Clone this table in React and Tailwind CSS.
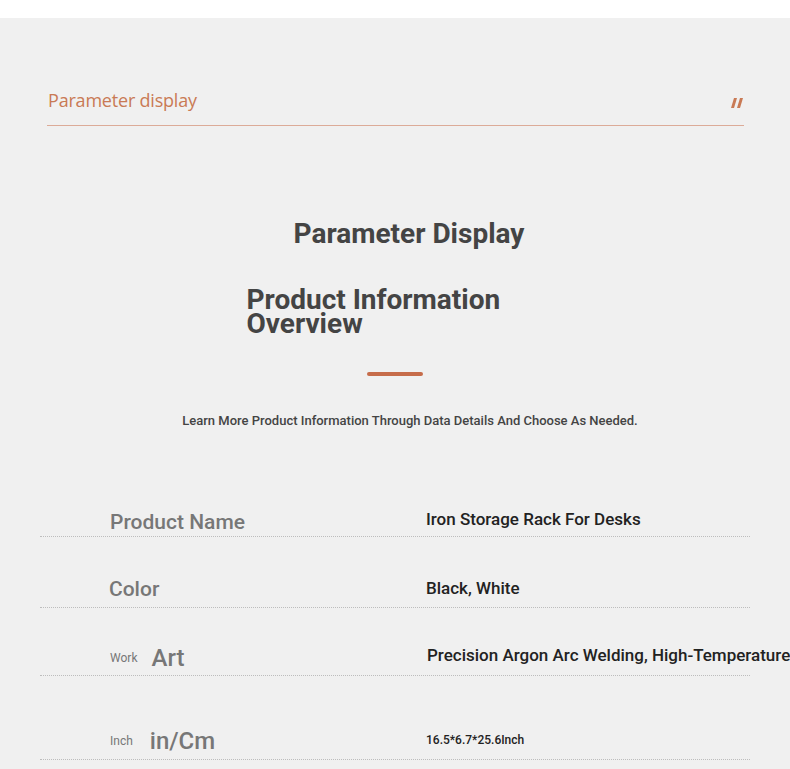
export default function App() {
  return (
    <div className="w-[790px] h-[769px] overflow-hidden bg-white" style={{ fontFamily: "Roboto, 'Liberation Sans', sans-serif" }}>
      <div className="h-[18px] bg-white" />
      <div className="bg-[#f0f0f0] h-[751px] pt-[70px]">
        <div className="mx-[47px] w-[697px] flex items-center justify-between border-b border-[#dcab98] pb-[13px]">
          <span className="text-[18px] leading-[24px] text-[#c97a55] pl-px tracking-[-0.2px]" style={{ fontFamily: "'Open Sans', sans-serif" }}>Parameter display</span>
          <svg width="12" height="10" viewBox="0 0 12 10" className="mr-[1px] mt-[5px]">
            <polygon points="3,0 6,0 3,10 0,10" fill="#c97a55" />
            <polygon points="9,0 12,0 9,10 6,10" fill="#c97a55" />
          </svg>
        </div>
        <div className="mt-[91px] flex justify-center pl-[28px]">
          <h1 className="text-[28px] leading-[34px] font-bold text-[#444]">Parameter Display</h1>
        </div>
        <div className="mt-[37px] flex justify-center">
          <div className="w-[317px] px-[10px] text-[28px] leading-[24px] font-bold text-[#444]">
            Product Information Overview
          </div>
        </div>
        <div className="mt-[36px] flex justify-center">
          <div className="w-[56px] h-[4px] rounded-full bg-[#c66c4a]" />
        </div>
        <div className="mt-[36px] flex justify-center pl-[30px]">
          <p className="text-[13px] leading-[18px] font-medium text-[#444]">Learn More Product Information Through Data Details And Choose As Needed.</p>
        </div>
        <div className="mt-[40px] mx-[40px] w-[710px]">
          <div className="h-[67px] flex items-end border-b border-dotted border-[#bdbdbd]">
            <div className="w-[386px] shrink-0 pl-[70px] mb-[0px] text-[21px] leading-[28px] font-medium text-[#777]">Product Name</div>
            <div className="mb-[5px] text-[17px] leading-[24px] font-medium text-[#222] whitespace-nowrap">Iron Storage Rack For Desks</div>
          </div>
          <div className="h-[71px] flex items-end border-b border-dotted border-[#bdbdbd]">
            <div className="w-[386px] shrink-0 pl-[69px] mb-[4px] text-[21px] leading-[28px] font-medium text-[#777]">Color</div>
            <div className="mb-[7px] text-[17px] leading-[24px] font-medium text-[#222] whitespace-nowrap">Black, White</div>
          </div>
          <div className="h-[68px] flex items-end border-b border-dotted border-[#bdbdbd]">
            <div className="w-[386px] shrink-0 pl-[70px] mb-[3px] flex items-center gap-[14px] text-[#777]">
              <span className="text-[12px] leading-[16px]">Work</span>
              <span className="text-[24px] leading-[28px] font-medium">Art</span>
            </div>
            <div className="mb-[8px] pl-px text-[17px] leading-[24px] font-medium text-[#222] whitespace-nowrap">Precision Argon Arc Welding, High-Temperature Baking Paint</div>
          </div>
          <div className="h-[84px] flex items-end border-b border-dotted border-[#bdbdbd]">
            <div className="w-[386px] shrink-0 pl-[70px] mb-[4px] flex items-center gap-[17px] text-[#777]">
              <span className="text-[12px] leading-[16px]">Inch</span>
              <span className="text-[24px] leading-[28px] font-medium">in/Cm</span>
            </div>
            <div className="mb-[11px] text-[12px] leading-[16px] font-medium text-[#222] whitespace-nowrap">16.5*6.7*25.6Inch</div>
          </div>
        </div>
      </div>
    </div>
  );
}
